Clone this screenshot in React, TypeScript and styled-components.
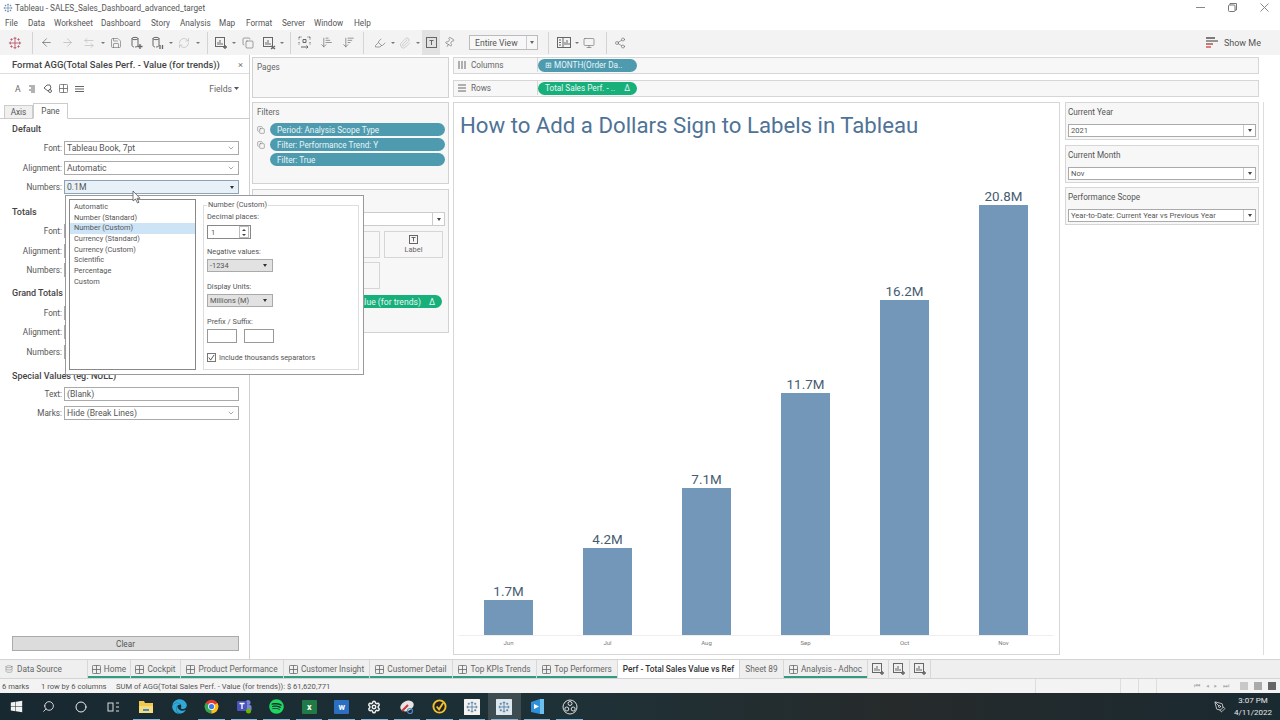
import React from 'react';
import styled, { createGlobalStyle } from 'styled-components';
import {
  ArrowLeft,
  ArrowRight,
  ArrowLeftRight,
  Save,
  Database,
  RefreshCw,
  Copy,
  ArrowDownNarrowWide,
  ArrowDownWideNarrow,
  Highlighter,
  Paperclip,
  Pin,
  Monitor,
  Share2,
  Search,
  Circle,
  Settings,
  PenTool,
  ChevronDown,
} from 'lucide-react';
import { FaWindows, FaSpotify, FaEdge } from 'react-icons/fa';

const GlobalStyle = createGlobalStyle`
  html, body { margin: 0; padding: 0; background: #fff; }
  body { font-family: Roboto, "Liberation Sans", sans-serif; color: #444; overflow: hidden; }
  * { box-sizing: border-box; }
`;

const Page = styled.div`
  width: 1280px;
  height: 720px;
  display: flex;
  flex-direction: column;
  position: relative;
  overflow: hidden;
`;

/* window chrome */
const TitleBar = styled.div`
  height: 15px;
  flex: none;
  display: flex;
  align-items: center;
  padding-left: 3px;
  gap: 2px;
  font-size: 8.2px;
  color: #555;
  background: #fff;
`;
const WindowButtons = styled.div`
  margin-left: auto;
  display: flex;
  color: #777;
`;
const WindowButton = styled.span`
  width: 32px;
  display: flex;
  justify-content: center;
  align-items: center;
  height: 15px;
`;
const MenuBar = styled.div`
  height: 15px;
  flex: none;
  display: flex;
  align-items: center;
  padding-left: 5px;
  font-size: 8.2px;
  color: #555;
`;
const MenuItem = styled.span<{ $w: number }>`
  width: ${(p) => p.$w}px;
`;
const Toolbar = styled.div`
  height: 25px;
  flex: none;
  display: flex;
  align-items: center;
  background: #f3f3f3;
  padding-left: 5px;
  color: #666;
`;
const Tool = styled.span<{ $w?: number; $active?: boolean; $dim?: boolean }>`
  width: ${(p) => p.$w ?? 21}px;
  height: 25px;
  flex: none;
  display: flex;
  align-items: center;
  justify-content: center;
  background: ${(p) => (p.$active ? '#e2e2e2' : 'transparent')};
  color: ${(p) => (p.$dim ? '#b5b5b5' : '#666')};
`;
const Caret = styled.span<{ $w?: number }>`
  width: ${(p) => p.$w ?? 7}px;
  flex: none;
  display: flex;
  justify-content: center;
  &::after {
    content: '';
    border-left: 2px solid transparent;
    border-right: 2px solid transparent;
    border-top: 2px solid #777;
  }
`;
const ToolSep = styled.span<{ $l: number; $r: number }>`
  width: 1px;
  height: 22px;
  flex: none;
  background: #d4d4d4;
  margin: 0 ${(p) => p.$r}px 0 ${(p) => p.$l}px;
`;
const FitBox = styled.div`
  width: 69px;
  height: 15px;
  flex: none;
  margin-left: 11px;
  display: flex;
  align-items: center;
  border: 1px solid #bbb;
  background: #f7f7f7;
  font-size: 8.6px;
  color: #555;
  padding-left: 5px;
  justify-content: space-between;
`;
const FitArrow = styled.span`
  width: 11px;
  height: 13px;
  border-left: 1px solid #ccc;
  display: flex;
  align-items: center;
  justify-content: center;
  &::after {
    content: '';
    border-left: 2.5px solid transparent;
    border-right: 2.5px solid transparent;
    border-top: 3px solid #666;
  }
`;
const ShowMe = styled.div`
  margin-left: auto;
  margin-right: 19px;
  display: flex;
  align-items: center;
  gap: 6px;
  font-size: 9px;
  color: #555;
`;

/* main area */
const Main = styled.div`
  flex: 1;
  min-height: 0;
  display: flex;
`;
const FormatPane = styled.aside`
  width: 250px;
  flex: none;
  display: flex;
  flex-direction: column;
  border-right: 1px solid #cfcfcf;
  background: #fff;
  padding-bottom: 8px;
`;
const FormatTitle = styled.div`
  height: 19px;
  flex: none;
  border-bottom: 1px solid #ddd;
  padding: 0 6px 0 12px;
  display: flex;
  align-items: center;
  justify-content: space-between;
  font-size: 9.4px;
  font-weight: 500;
  color: #444;
`;
const CloseMark = styled.span`
  color: #777;
  font-weight: 400;
`;
const FormatTools = styled.div`
  height: 29px;
  flex: none;
  display: flex;
  align-items: center;
  padding: 0 10px 0 15px;
  gap: 7px;
  color: #666;
  font-size: 8.6px;
`;
const FieldsMenu = styled.span`
  margin-left: auto;
  color: #666;
  display: flex;
  align-items: center;
  gap: 2px;
`;
const Tabs = styled.div`
  height: 16px;
  flex: none;
  display: flex;
  align-items: flex-end;
  padding-left: 4px;
  border-bottom: 1px solid #ccc;
  font-size: 8.2px;
  color: #555;
`;
const PaneTab = styled.span<{ $on?: boolean }>`
  width: ${(p) => (p.$on ? 35 : 29)}px;
  height: ${(p) => (p.$on ? 16 : 14)}px;
  display: flex;
  align-items: center;
  justify-content: center;
  background: ${(p) => (p.$on ? '#fff' : '#f0f0f0')};
  border: 1px solid #ccc;
  border-bottom: ${(p) => (p.$on ? '1px solid #fff' : '1px solid #ccc')};
  margin-bottom: -1px;
`;
const FormatBody = styled.div`
  flex: 1;
  padding: 3.5px 10px 0 12px;
  display: flex;
  flex-direction: column;
`;
const Heading = styled.div<{ $top?: number }>`
  font-size: 9px;
  font-weight: 500;
  color: #444;
  margin-top: ${(p) => p.$top ?? 0}px;
  height: 13px;
  line-height: 13px;
  white-space: nowrap;
`;
const FieldRow = styled.div<{ $top?: number }>`
  display: flex;
  align-items: center;
  gap: 2px;
  margin-top: ${(p) => p.$top ?? 5.5}px;
  height: 14px;
`;
const FieldLabel = styled.span`
  width: 50px;
  text-align: right;
  font-size: 8.2px;
  color: #555;
  white-space: nowrap;
  flex: none;
`;
const FieldSelect = styled.div<{ $focus?: boolean }>`
  flex: 1;
  height: 14px;
  border: 1px solid ${(p) => (p.$focus ? '#8ea3b8' : '#aaa')};
  background: ${(p) => (p.$focus ? '#e8f0f8' : '#fff')};
  font-size: 8.6px;
  color: #555;
  display: flex;
  align-items: center;
  justify-content: space-between;
  padding: 0 3px 0 2px;
`;
const Triangle = styled.span`
  border-left: 2.5px solid transparent;
  border-right: 2.5px solid transparent;
  border-top: 3px solid #333;
  margin-right: 1px;
`;
const ClearButton = styled.div`
  margin: auto 0 0;
  height: 15px;
  background: #dcdcdc;
  border: 1px solid #aaa;
  font-size: 8.2px;
  color: #555;
  display: flex;
  align-items: center;
  justify-content: center;
`;

const CardsColumn = styled.div`
  width: 197px;
  flex: none;
  margin-left: 2px;
  padding-top: 2px;
  display: flex;
  flex-direction: column;
  gap: 4px;
`;
const Card = styled.div<{ $h: number; $gap?: number }>`
  height: ${(p) => p.$h}px;
  flex: none;
  background: #f7f7f7;
  border: 1px solid #d2d2d2;
  padding: 4px 3px 0 4px;
  font-size: 8.2px;
  color: #666;
  margin-top: ${(p) => p.$gap ?? 0}px;
`;
const FilterList = styled.div`
  margin-top: 6px;
  display: flex;
  flex-direction: column;
  gap: 2px;
`;
const FilterRow = styled.div`
  display: flex;
  align-items: center;
  gap: 5px;
`;
const FilterIcon = styled.span`
  width: 8px;
  height: 8px;
  flex: none;
  display: flex;
`;
const Pill = styled.div<{ $c: string }>`
  flex: 1;
  height: 13px;
  border-radius: 7px;
  background: ${(p) => p.$c};
  color: #e8f4f6;
  font-size: 8.2px;
  padding: 0 7px;
  display: flex;
  align-items: center;
  justify-content: space-between;
  white-space: nowrap;
  overflow: hidden;
`;
const MarkSelect = styled.div`
  height: 14px;
  margin: 8px 0 0 1px;
  background: #fff;
  border: 1px solid #ccc;
  display: flex;
  justify-content: flex-end;
`;
const MarkGrid = styled.div`
  margin: 5px 0 0 1px;
  display: grid;
  grid-template-columns: repeat(3, 59px);
  grid-auto-rows: 27px;
  gap: 4px;
`;
const MarkCell = styled.div`
  border: 1px solid #d6d6d6;
  background: #f7f7f7;
  display: flex;
  flex-direction: column;
  align-items: center;
  justify-content: center;
  gap: 1px;
  font-size: 7.4px;
  color: #666;
`;
const MarkPill = styled(Pill)`
  margin: 6px 3px 0 3px;
  justify-content: flex-end;
  gap: 8px;
  font-size: 8.6px;
`;

const Workspace = styled.div`
  flex: 1;
  margin-left: 4px;
  padding-top: 2px;
  display: flex;
  flex-direction: column;
  min-width: 0;
`;
const Shelf = styled.div<{ $mb: number }>`
  width: 806px;
  height: 17px;
  flex: none;
  margin-bottom: ${(p) => p.$mb}px;
  padding-bottom: 1px;
  background: #f7f7f7;
  border: 1px solid #d6d6d6;
  display: flex;
  align-items: center;
`;
const ShelfLabel = styled.div`
  width: 84px;
  height: 100%;
  border-right: 1px solid #d6d6d6;
  display: flex;
  align-items: center;
  gap: 5px;
  padding-left: 4px;
  font-size: 8.2px;
  color: #666;
  flex: none;
`;
const ShelfPill = styled(Pill)`
  flex: none;
  width: 99px;
  margin-left: 0;
`;
const ViewRow = styled.div`
  flex: 1;
  min-height: 0;
  display: flex;
  margin-bottom: 4px;
`;
const ChartCard = styled.section`
  width: 607px;
  flex: none;
  background: #fff;
  border: 1px solid #d6d6d6;
  padding: 0 6px 0 5px;
  display: flex;
  flex-direction: column;
`;
const ChartTitle = styled.h1`
  margin: 0;
  padding-left: 1px;
  height: 44px;
  line-height: 44px;
  font-size: 22.2px;
  font-weight: 400;
  color: #4e7396;
  white-space: nowrap;
`;
const Plot = styled.div`
  flex: 1;
  display: flex;
  align-items: flex-end;
  border-bottom: 1px solid #eee;
  min-height: 0;
`;
const BarColumn = styled.div`
  width: 99px;
  flex: none;
  display: flex;
  flex-direction: column;
  align-items: center;
`;
const BarValue = styled.span`
  font-size: 13.4px;
  color: #465c72;
  line-height: 15px;
  margin-bottom: 1px;
`;
const Bar = styled.div`
  width: 49px;
  background: #7297b9;
`;
const AxisRow = styled.div`
  height: 18px;
  flex: none;
  display: flex;
`;
const AxisLabel = styled.span`
  width: 99px;
  text-align: center;
  font-size: 6px;
  color: #777;
  padding-top: 3px;
`;
const ParamsColumn = styled.div`
  width: 194px;
  flex: none;
  margin-left: 5px;
  display: flex;
  flex-direction: column;
  gap: 4.5px;
`;
const ParamCard = styled.div`
  height: 38px;
  flex: none;
  background: #f7f7f7;
  border: 1px solid #d6d6d6;
  padding: 4px 2px 0 2px;
  font-size: 8.2px;
  color: #555;
`;
const ParamSelect = styled.div`
  margin-top: 7px;
  height: 13px;
  background: #fff;
  border: 1px solid #aaa;
  display: flex;
  align-items: center;
  justify-content: space-between;
  font-size: 7.6px;
  padding-left: 2px;
  color: #555;
`;
const SmallArrow = styled.span`
  width: 12px;
  height: 100%;
  flex: none;
  border-left: 1px solid #ccc;
  display: flex;
  align-items: center;
  justify-content: center;
  &::after {
    content: '';
    border-left: 2.5px solid transparent;
    border-right: 2.5px solid transparent;
    border-top: 3px solid #444;
  }
`;
const RightEdge = styled.div`
  width: 17px;
  flex: none;
  margin-left: 4px;
  border-left: 1px solid #ddd;
`;

/* number format popup */
const Popup = styled.div`
  position: absolute;
  left: 65px;
  top: 195px;
  width: 299px;
  height: 180px;
  background: #fff;
  border: 1px solid #999;
  padding: 3px 4px 4px 3px;
  display: flex;
  gap: 7px;
  font-size: 7.4px;
  color: #555;
`;
const FormatList = styled.ul`
  list-style: none;
  margin: 0;
  padding: 2px 0 0;
  width: 127px;
  border: 1px solid #888;
  flex: none;
`;
const FormatItem = styled.li<{ $on?: boolean }>`
  height: 10.7px;
  line-height: 10.7px;
  padding-left: 4px;
  background: ${(p) => (p.$on ? '#cde4f7' : 'transparent')};
`;
const Group = styled.fieldset`
  flex: 1;
  margin: 2px 0 0;
  padding: 3px 0 0 3px;
  border: 1px solid #ddd;
  display: flex;
  flex-direction: column;
  min-width: 0;
`;
const GroupLegend = styled.legend`
  padding: 0 1px;
  margin-left: 0;
  line-height: 8px;
`;
const GroupLabel = styled.div<{ $top?: number }>`
  margin-top: ${(p) => p.$top ?? 0}px;
  height: 10px;
  line-height: 10px;
`;
const SpinBox = styled.div`
  margin-top: 3px;
  width: 44px;
  height: 14px;
  border: 1px solid #888;
  display: flex;
  align-items: center;
  justify-content: space-between;
  padding-left: 3px;
`;
const SpinButtons = styled.div`
  width: 10px;
  height: 12px;
  margin-right: 1px;
  border: 1px solid #bbb;
  color: #444;
  display: flex;
  flex-direction: column;
  align-items: center;
  justify-content: space-around;
  &::before {
    content: '';
    border-left: 2px solid transparent;
    border-right: 2px solid transparent;
    border-bottom: 2px solid #444;
  }
  &::after {
    content: '';
    border-left: 2px solid transparent;
    border-right: 2px solid transparent;
    border-top: 2px solid #444;
  }
`;
const ComboBox = styled.div`
  margin-top: 2px;
  width: 66px;
  height: 13px;
  background: #e2e2e2;
  border: 1px solid #aaa;
  display: flex;
  align-items: center;
  justify-content: space-between;
  padding: 0 5px 0 2px;
  &::after {
    content: '';
    border-left: 2.5px solid transparent;
    border-right: 2.5px solid transparent;
    border-top: 3px solid #333;
  }
`;
const AffixRow = styled.div`
  margin-top: 2px;
  display: flex;
  gap: 7px;
`;
const AffixBox = styled.div`
  width: 30px;
  height: 14px;
  border: 1px solid #999;
`;
const CheckRow = styled.div`
  margin-top: 10px;
  display: flex;
  align-items: center;
  gap: 3px;
  font-size: 7.3px;
`;
const CheckBox = styled.span`
  width: 9px;
  height: 9px;
  border: 1px solid #777;
  display: flex;
`;
const Cursor = styled.svg`
  position: absolute;
  left: 132px;
  top: 190px;
`;

/* sheet tabs and status */
const SheetBar = styled.div`
  height: 20px;
  flex: none;
  display: flex;
  background: #efefef;
  border-top: 1px solid #d4d4d4;
  border-bottom: 1px solid #d4d4d4;
  font-size: 8.3px;
  color: #666;
`;
const SheetTab = styled.div<{ $w: number; $line?: boolean; $on?: boolean }>`
  width: ${(p) => p.$w}px;
  flex: none;
  display: flex;
  align-items: center;
  justify-content: center;
  gap: 3px;
  white-space: nowrap;
  border-right: 1px solid #d8d8d8;
  background: ${(p) => (p.$on ? '#fff' : 'transparent')};
  color: ${(p) => (p.$on ? '#333' : '#666')};
  font-weight: ${(p) => (p.$on ? 500 : 400)};
  box-shadow: ${(p) => (p.$line ? 'inset 0 -2px 0 #2f9e80' : 'none')};
`;
const SourceTab = styled(SheetTab)`
  justify-content: flex-start;
  padding-left: 5px;
  gap: 4px;
`;
const StatusBar = styled.div`
  height: 14px;
  flex: none;
  display: flex;
  align-items: center;
  background: #f3f3f3;
  font-size: 7.6px;
  color: #555;
  padding-left: 2px;
`;
const StatusText = styled.span<{ $w: number }>`
  width: ${(p) => p.$w}px;
  flex: none;
  white-space: nowrap;
`;
const StatusCell = styled.span<{ $w: number }>`
  width: ${(p) => p.$w}px;
  height: 100%;
  flex: none;
  border-left: 1px solid #ddd;
`;
const PageNav = styled.div`
  flex: 1;
  height: 100%;
  border-left: 1px solid #ddd;
  display: flex;
  align-items: center;
  padding-left: 37px;
  color: #aaa;
  font-size: 7px;
  word-spacing: 4px;
`;
const ViewIcons = styled.div`
  display: flex;
  gap: 6px;
  margin-left: auto;
  margin-right: 4px;
`;
const ViewIcon = styled.span<{ $c: string }>`
  width: 8px;
  height: 8px;
  background: ${(p) => p.$c};
`;

/* taskbar */
const Taskbar = styled.div`
  height: 27px;
  flex: none;
  display: flex;
  align-items: center;
  background: linear-gradient(90deg, #182830 0%, #1e3137 45%, #262a2b 70%, #1a2a31 100%);
  color: #eee;
  padding-left: 0;
`;
const TaskIcon = styled.div<{ $open?: boolean; $active?: boolean }>`
  width: 32.55px;
  height: 27px;
  flex: none;
  display: flex;
  align-items: center;
  justify-content: center;
  position: relative;
  background: ${(p) => (p.$active ? '#3e4c51' : 'transparent')};
  &::after {
    content: '';
    display: ${(p) => (p.$open ? 'block' : 'none')};
    position: absolute;
    left: 3px;
    right: 3px;
    bottom: 0;
    height: 1px;
    background: #7fb6dc;
  }
`;
const Tray = styled.div`
  margin-left: auto;
  display: flex;
  align-items: center;
  gap: 8px;
  padding-right: 8px;
`;
const Clock = styled.div`
  font-size: 8px;
  text-align: center;
  line-height: 12px;
  color: #e6e6e6;
`;
const AppTile = styled.span<{ $c: string }>`
  width: 15px;
  height: 14px;
  background: ${(p) => p.$c};
  color: #fff;
  font-size: 9px;
  font-weight: 700;
  display: flex;
  align-items: center;
  justify-content: center;
  border-radius: 1px;
`;

const marks = 'M12 6.500v11M6.500 12h11M12 1.500v5M9.500 4h5M12 17.500v5M9.500 20h5M1.500 12h5M4 9.500v5M17.500 12h5M20 9.500v5M6 4v4M4 6h4M18 4v4M16 6h4M6 16v4M4 18h4M18 16v4M16 18h4';

const TableauMark = ({ size = 12, color = '#777' }: { size?: number; color?: string }) => (
  <svg width={size} height={size} viewBox="0 0 24 24" stroke={color} strokeWidth="1.5" fill="none">
    <path d={marks} />
  </svg>
);

const TableauTile = ({ bg }: { bg: string }) => (
  <svg width="16" height="16" viewBox="-3 -3 30 30">
    <rect x="-3" y="-3" width="30" height="30" rx="1" fill={bg} />
    <path d={marks} stroke="#3f6f96" strokeWidth="1.400" fill="none" />
  </svg>
);

const SheetGlyph = () => (
  <svg width="9" height="9" viewBox="0 0 10 10" fill="none" stroke="#666" strokeWidth="0.9">
    <rect x="0.5" y="0.5" width="9" height="9" rx="1" />
    <path d="M5 0.500v9M0.500 5h9" />
  </svg>
);

const ChartPlus = ({ kind }: { kind: 'plus' | 'x' }) => (
  <svg width="14" height="14" viewBox="0 0 14 14" fill="none" stroke="#666" strokeWidth="1">
    <rect x="1.500" y="1.500" width="9" height="9" />
    <path d="M4 9V6M6 9V4M8 9V7" />
    {kind === 'plus' ? <path d="M11 9v4M9 11h4" strokeWidth="1.400" /> : <path d="M9 10l4 3M13 10l-4 3" strokeWidth="1.400" />}
  </svg>
);

const DataSource = ({ kind }: { kind: 'plus' | 'pause' }) => (
  <svg width="14" height="14" viewBox="0 0 14 14" fill="none" stroke="#666" strokeWidth="1">
    <path d="M2 2.500C2 1 8 1 8 2.500V9.500C8 10.500 6 11 5 11M2 2.500V9.500C2 10.300 3 10.800 4 11M2 2.500C2 4 8 4 8 2.500" />
    {kind === 'plus' ? <path d="M10 8v5M7.500 10.500h5" strokeWidth="1.300" /> : <path d="M9 9v4M11.500 9v4" strokeWidth="1.300" />}
  </svg>
);

const SwapCard = () => (
  <svg width="13" height="13" viewBox="0 0 13 13" fill="none" stroke="#666" strokeWidth="1">
    <path d="M1 1h3M1 1v3M12 1H9M12 1v3M1 6v3M12 6v3" strokeDasharray="1.500 1" />
    <path d="M3 11h7M8.500 9.500L10 11l-1.500 1.500" />
    <path d="M5 3.500h3v3H5z" />
  </svg>
);

const ChromeIcon = () => (
  <svg width="15" height="15" viewBox="0 0 24 24">
    <circle cx="12" cy="12" r="11" fill="#e33b2e" />
    <path d="M12 12L2.500 6.500A11 11 0 0 0 12 23z" fill="#2da94f" />
    <path d="M12 12v11a11 11 0 0 0 9.500-16.500z" fill="#fbc116" />
    <circle cx="12" cy="12" r="5.500" fill="#fff" />
    <circle cx="12" cy="12" r="4.200" fill="#3f7ee8" />
  </svg>
);

const ExplorerIcon = () => (
  <svg width="16" height="14" viewBox="0 0 16 14">
    <path d="M1 1h5l1 2h8v10H1z" fill="#f2c94c" />
    <rect x="1" y="6" width="14" height="7" fill="#f7dc7c" />
    <rect x="5" y="9" width="6" height="2" fill="#3f8fc4" />
  </svg>
);

const TeamsIcon = () => (
  <svg width="16" height="15" viewBox="0 0 16 15">
    <circle cx="12" cy="3.500" r="2.500" fill="#7b83d6" />
    <rect x="9" y="6" width="6.500" height="6" rx="1.500" fill="#7b83d6" />
    <rect x="1" y="2" width="10" height="10" rx="1" fill="#4b53bc" />
    <path d="M3.500 4.500h5M6 4.500v5.500" stroke="#fff" strokeWidth="1.300" />
    <circle cx="12.500" cy="12" r="2.500" fill="#6bb700" />
  </svg>
);

const SnipIcon = () => (
  <svg width="16" height="16" viewBox="0 0 16 16">
    <ellipse cx="8" cy="7" rx="7" ry="5" fill="#e9e4e4" transform="rotate(-25 8 7)" />
    <path d="M3 12l6-6" stroke="#c33" strokeWidth="2" />
    <circle cx="11" cy="12" r="2.500" fill="none" stroke="#4b8fc9" strokeWidth="1.200" />
  </svg>
);

const NortonIcon = () => (
  <svg width="15" height="15" viewBox="0 0 16 16">
    <circle cx="8" cy="8" r="6.500" fill="#222" stroke="#f2c230" strokeWidth="2" />
    <path d="M5 8l2.500 3L12 4" fill="none" stroke="#f2c230" strokeWidth="2" />
  </svg>
);

const MovieIcon = () => (
  <svg width="15" height="17" viewBox="0 0 15 17">
    <path d="M1 4l9-3v15l-9-2z" fill="#2f8fd8" />
    <path d="M10 1h4v15h-4z" fill="#6cc0ef" />
    <path d="M4 6l5 2.500L4 11z" fill="#fff" />
  </svg>
);

const ObsIcon = () => (
  <svg width="16" height="16" viewBox="0 0 16 16" fill="none" stroke="#ddd" strokeWidth="1">
    <circle cx="8" cy="8" r="7" />
    <circle cx="8" cy="4.500" r="2" />
    <circle cx="4.800" cy="10" r="2" />
    <circle cx="11.200" cy="10" r="2" />
  </svg>
);

const menus: [string, number][] = [
  ['File', 23],
  ['Data', 26],
  ['Worksheet', 47],
  ['Dashboard', 50],
  ['Story', 29],
  ['Analysis', 39],
  ['Map', 27],
  ['Format', 36],
  ['Server', 32],
  ['Window', 40],
  ['Help', 30],
];

const numberFormats = [
  'Automatic',
  'Number (Standard)',
  'Number (Custom)',
  'Currency (Standard)',
  'Currency (Custom)',
  'Scientific',
  'Percentage',
  'Custom',
];

const bars = [
  { month: 'Jun', label: '1.7M', height: 35 },
  { month: 'Jul', label: '4.2M', height: 87 },
  { month: 'Aug', label: '7.1M', height: 147 },
  { month: 'Sep', label: '11.7M', height: 242 },
  { month: 'Oct', label: '16.2M', height: 335 },
  { month: 'Nov', label: '20.8M', height: 430 },
];

const sheets: { name: string; w: number; glyph?: boolean; line?: boolean; on?: boolean }[] = [
  { name: 'Home', w: 43, glyph: true, line: true },
  { name: 'Cockpit', w: 50, glyph: true, line: true },
  { name: 'Product Performance', w: 103, glyph: true, line: true },
  { name: 'Customer Insight', w: 86, glyph: true, line: true },
  { name: 'Customer Detail', w: 83, glyph: true, line: true },
  { name: 'Top KPIs Trends', w: 84, glyph: true, line: true },
  { name: 'Top Performers', w: 81, glyph: true, line: true },
  { name: 'Perf - Total Sales Value vs Ref', w: 122, on: true },
  { name: 'Sheet 89', w: 44 },
  { name: 'Analysis - Adhoc', w: 84, glyph: true, line: true },
];

const formatGroups: { title: string; top: number; rows: [string, string, boolean?][] }[] = [
  {
    title: 'Default',
    top: 0,
    rows: [
      ['Font:', 'Tableau Book, 7pt'],
      ['Alignment:', 'Automatic'],
      ['Numbers:', '0.1M', true],
    ],
  },
  {
    title: 'Totals',
    top: 11.5,
    rows: [
      ['Font:', ''],
      ['Alignment:', ''],
      ['Numbers:', ''],
    ],
  },
  {
    title: 'Grand Totals',
    top: 10,
    rows: [
      ['Font:', ''],
      ['Alignment:', ''],
      ['Numbers:', ''],
    ],
  },
];

const params = [
  { title: 'Current Year', value: '2021' },
  { title: 'Current Month', value: 'Nov' },
  { title: 'Performance Scope', value: 'Year-to-Date: Current Year vs Previous Year' },
];

export default function App() {
  return (
    <Page>
      <GlobalStyle />
      <TitleBar>
        <TableauMark size={10} color="#5b7fa6" />
        Tableau - SALES_Sales_Dashboard_advanced_target
        <WindowButtons>
          <WindowButton>
            <svg width="9" height="9" viewBox="0 0 9 9" stroke="#888"><path d="M0 4.500h9" /></svg>
          </WindowButton>
          <WindowButton>
            <svg width="9" height="9" viewBox="0 0 9 9" fill="none" stroke="#777"><rect x="0.500" y="2" width="6.500" height="6.500" rx="1" /><path d="M2 2V.500h6.500V7H7" /></svg>
          </WindowButton>
          <WindowButton>
            <svg width="9" height="9" viewBox="0 0 9 9" stroke="#888"><path d="M.500.500l8 8M8.500.500l-8 8" /></svg>
          </WindowButton>
        </WindowButtons>
      </TitleBar>
      <MenuBar>
        {menus.map(([name, w]) => (
          <MenuItem key={name} $w={w}>{name}</MenuItem>
        ))}
      </MenuBar>
      <Toolbar>
        <Tool $w={20}><TableauMark size={14} color="#b9566a" /></Tool>
        <ToolSep $l={7} $r={3} />
        <Tool><ArrowLeft size={13} strokeWidth={1.3} /></Tool>
        <Tool $dim><ArrowRight size={13} strokeWidth={1.3} /></Tool>
        <Tool $dim><ArrowLeftRight size={12} strokeWidth={1.2} /></Tool>
        <Caret />
        <Tool $w={20}><Save size={12} strokeWidth={1.2} /></Tool>
        <Tool><DataSource kind="plus" /></Tool>
        <Tool><DataSource kind="pause" /></Tool>
        <Caret $w={6} />
        <Tool $w={20} $dim><RefreshCw size={12} strokeWidth={1.2} /></Tool>
        <Caret $w={7} />
        <ToolSep $l={6} $r={2} />
        <Tool $w={21}><ChartPlus kind="plus" /></Tool>
        <Caret $w={6} />
        <Tool $w={22}><Copy size={12} strokeWidth={1.2} /></Tool>
        <Tool $w={20}><ChartPlus kind="x" /></Tool>
        <Caret $w={6} />
        <ToolSep $l={5} $r={3} />
        <Tool $w={21}><SwapCard /></Tool>
        <Tool $w={22}><ArrowDownNarrowWide size={13} strokeWidth={1.2} /></Tool>
        <Tool $w={22}><ArrowDownWideNarrow size={13} strokeWidth={1.2} /></Tool>
        <ToolSep $l={4} $r={6} />
        <Tool $w={20}><Highlighter size={12} strokeWidth={1.2} /></Tool>
        <Caret $w={6} />
        <Tool $w={18} $dim><Paperclip size={12} strokeWidth={1.2} /></Tool>
        <Caret $w={8} />
        <Tool $w={18} $active>
          <svg width="11" height="11" viewBox="0 0 11 11" fill="none" stroke="#666"><rect x=".5" y=".5" width="10" height="10" /><path d="M3.500 3.500h4M5.500 3.500v4.500" /></svg>
        </Tool>
        <Tool $w={18}><Pin size={11} strokeWidth={1.2} style={{ transform: 'rotate(30deg)' }} /></Tool>
        <FitBox>Entire View<FitArrow /></FitBox>
        <ToolSep $l={10} $r={5} />
        <Tool $w={20}>
          <svg width="14" height="11" viewBox="0 0 14 11" fill="none" stroke="#666"><rect x=".5" y=".5" width="13" height="10" /><path d="M6 .5v10M2 3h2M2 5.500h2M2 8h2M8 8V5M10 8V3M12 8V6" /></svg>
        </Tool>
        <Caret $w={6} />
        <Tool $w={18}><Monitor size={12} strokeWidth={1.2} /></Tool>
        <ToolSep $l={8} $r={4} />
        <Tool $w={18}><Share2 size={12} strokeWidth={1.2} /></Tool>
        <ShowMe>
          <svg width="12" height="11" viewBox="0 0 12 11"><path d="M0 1h9" stroke="#555" strokeWidth="1.500" /><path d="M0 4h12" stroke="#777" strokeWidth="1.500" /><path d="M0 7h7" stroke="#a55" strokeWidth="1.500" /><path d="M0 10h5" stroke="#d55" strokeWidth="1.500" /></svg>
          Show Me
        </ShowMe>
      </Toolbar>

      <Main>
        <FormatPane>
          <FormatTitle>
            Format AGG(Total Sales Perf. -  Value (for trends))
            <CloseMark>×</CloseMark>
          </FormatTitle>
          <FormatTools>
            A
            <svg width="8" height="8" viewBox="0 0 8 8" stroke="#666"><path d="M1 1h6M3 3h4M1 5h6M3 7h4" /></svg>
            <svg width="9" height="9" viewBox="0 0 9 9" fill="none" stroke="#666"><path d="M1 4l3-3h3l1 3-3 3z" /><circle cx="7" cy="7" r="1.500" /></svg>
            <SheetGlyph />
            <svg width="9" height="8" viewBox="0 0 9 8" stroke="#666"><path d="M0 1.500h9M0 4h9M0 6.500h9" /></svg>
            <FieldsMenu>
              Fields
              <svg width="5" height="3" viewBox="0 0 5 3" fill="#555"><path d="M0 0h5L2.500 3z" /></svg>
            </FieldsMenu>
          </FormatTools>
          <Tabs>
            <PaneTab>Axis</PaneTab>
            <PaneTab $on>Pane</PaneTab>
          </Tabs>
          <FormatBody>
            {formatGroups.map((group) => (
              <React.Fragment key={group.title}>
                <Heading $top={group.top}>{group.title}</Heading>
                {group.rows.map(([label, value, focus]) => (
                  <FieldRow key={label}>
                    <FieldLabel>{label}</FieldLabel>
                    <FieldSelect $focus={focus}>
                      {value}
                      {focus ? <Triangle /> : <ChevronDown size={8} strokeWidth={1.5} />}
                    </FieldSelect>
                  </FieldRow>
                ))}
              </React.Fragment>
            ))}
            <Heading $top={11}>Special Values (eg. NULL)</Heading>
            <FieldRow $top={4}>
              <FieldLabel>Text:</FieldLabel>
              <FieldSelect>(Blank)</FieldSelect>
            </FieldRow>
            <FieldRow>
              <FieldLabel>Marks:</FieldLabel>
              <FieldSelect>
                Hide (Break Lines)
                <ChevronDown size={8} strokeWidth={1.5} />
              </FieldSelect>
            </FieldRow>
            <ClearButton>Clear</ClearButton>
          </FormatBody>
        </FormatPane>

        <CardsColumn>
          <Card $h={41}>Pages</Card>
          <Card $h={82}>
            Filters
            <FilterList>
              <FilterRow>
                <FilterIcon><Copy size={8} strokeWidth={1.5} /></FilterIcon>
                <Pill $c="#4e9bb0">Period: Analysis Scope Type</Pill>
              </FilterRow>
              <FilterRow>
                <FilterIcon><Copy size={8} strokeWidth={1.5} /></FilterIcon>
                <Pill $c="#4e9bb0">Filter: Performance Trend: Y</Pill>
              </FilterRow>
              <FilterRow>
                <FilterIcon />
                <Pill $c="#4e9bb0">Filter: True</Pill>
              </FilterRow>
            </FilterList>
          </Card>
          <Card $h={144} $gap={1}>
            Marks
            <MarkSelect><SmallArrow /></MarkSelect>
            <MarkGrid>
              <MarkCell>Color</MarkCell>
              <MarkCell>Size</MarkCell>
              <MarkCell>
                <svg width="9" height="9" viewBox="0 0 9 9" fill="none" stroke="#666"><rect x=".5" y=".5" width="8" height="8" /><path d="M2.500 2.500h4M4.500 2.500v4" /></svg>
                Label
              </MarkCell>
              <MarkCell>Detail</MarkCell>
              <MarkCell>Tooltip</MarkCell>
            </MarkGrid>
            <MarkPill $c="#17b07a">
              Total Sales Perf. - Value (for trends)
              <span>Δ</span>
            </MarkPill>
          </Card>
        </CardsColumn>

        <Workspace>
          <Shelf $mb={6}>
            <ShelfLabel>
              <svg width="8" height="8" viewBox="0 0 8 8" stroke="#666"><path d="M1 0v8M4 0v8M7 0v8" /></svg>
              Columns
            </ShelfLabel>
            <ShelfPill $c="#4e9bb0">⊞ MONTH(Order Da..</ShelfPill>
          </Shelf>
          <Shelf $mb={5}>
            <ShelfLabel>
              <svg width="8" height="8" viewBox="0 0 8 8" stroke="#666"><path d="M0 1h8M0 4h8M0 7h8" /></svg>
              Rows
            </ShelfLabel>
            <ShelfPill $c="#17b07a">
              Total Sales Perf. - ..
              <span>Δ</span>
            </ShelfPill>
          </Shelf>
          <ViewRow>
            <ChartCard>
              <ChartTitle>How to Add a Dollars Sign to Labels in Tableau</ChartTitle>
              <Plot>
                {bars.map((bar) => (
                  <BarColumn key={bar.month}>
                    <BarValue>{bar.label}</BarValue>
                    <Bar style={{ height: bar.height }} />
                  </BarColumn>
                ))}
              </Plot>
              <AxisRow>
                {bars.map((bar) => (
                  <AxisLabel key={bar.month}>{bar.month}</AxisLabel>
                ))}
              </AxisRow>
            </ChartCard>
            <ParamsColumn>
              {params.map((param) => (
                <ParamCard key={param.title}>
                  {param.title}
                  <ParamSelect>
                    {param.value}
                    <SmallArrow />
                  </ParamSelect>
                </ParamCard>
              ))}
            </ParamsColumn>
            <RightEdge />
          </ViewRow>
        </Workspace>
      </Main>

      <SheetBar>
        <SourceTab $w={88}>
          <Database size={8} strokeWidth={1.3} />
          Data Source
        </SourceTab>
        {sheets.map((sheet) => (
          <SheetTab key={sheet.name} $w={sheet.w} $line={sheet.line} $on={sheet.on}>
            {sheet.glyph && <SheetGlyph />}
            {sheet.name}
          </SheetTab>
        ))}
        <SheetTab $w={21}><ChartPlus kind="plus" /></SheetTab>
        <SheetTab $w={21}><ChartPlus kind="plus" /></SheetTab>
        <SheetTab $w={21}><ChartPlus kind="plus" /></SheetTab>
      </SheetBar>
      <StatusBar>
        <StatusText $w={39}>6 marks</StatusText>
        <StatusText $w={75}>1 row by 6 columns</StatusText>
        <StatusText $w={919}>SUM of AGG(Total Sales Perf. -  Value (for trends)): $ 61,620,771</StatusText>
        <StatusCell $w={85} />
        <StatusCell $w={18} />
        <StatusCell $w={18} />
        <PageNav>
          ⏮ ◂ ▸ ⏭
          <ViewIcons>
            <ViewIcon $c="#c8c8c8" />
            <ViewIcon $c="#aaa" />
            <ViewIcon $c="#666" />
          </ViewIcons>
        </PageNav>
      </StatusBar>

      <Taskbar>
        <TaskIcon><FaWindows size={13} color="#f2f2f2" /></TaskIcon>
        <TaskIcon><Search size={13} strokeWidth={1.6} color="#eee" style={{ transform: 'scaleX(-1)' }} /></TaskIcon>
        <TaskIcon><Circle size={12} strokeWidth={2} color="#eee" /></TaskIcon>
        <TaskIcon>
          <svg width="13" height="12" viewBox="0 0 13 12" fill="none" stroke="#ddd"><rect x="1" y="2" width="5" height="8" /><path d="M9 2h3M9 6h3M9 10h3" /></svg>
        </TaskIcon>
        <TaskIcon $open><ExplorerIcon /></TaskIcon>
        <TaskIcon><FaEdge size={15} color="#2fa8d8" /></TaskIcon>
        <TaskIcon $open><ChromeIcon /></TaskIcon>
        <TaskIcon $open><TeamsIcon /></TaskIcon>
        <TaskIcon $open><FaSpotify size={15} color="#1ed760" /></TaskIcon>
        <TaskIcon $open><AppTile $c="#1f7a45">x</AppTile></TaskIcon>
        <TaskIcon $open><AppTile $c="#2b6fc2">w</AppTile></TaskIcon>
        <TaskIcon $open><Settings size={14} strokeWidth={2.500} color="#f0f0f0" /></TaskIcon>
        <TaskIcon $open><SnipIcon /></TaskIcon>
        <TaskIcon $open><NortonIcon /></TaskIcon>
        <TaskIcon $open><TableauTile bg="#f2f2f2" /></TaskIcon>
        <TaskIcon $open $active><TableauTile bg="#dfe7ee" /></TaskIcon>
        <TaskIcon $open><MovieIcon /></TaskIcon>
        <TaskIcon $open><ObsIcon /></TaskIcon>
        <Tray>
          <PenTool size={12} strokeWidth={1.5} color="#e8e8e8" />
          <Clock>
            3:07 PM
            <br />
            4/11/2022
          </Clock>
        </Tray>
      </Taskbar>

      <Popup>
        <FormatList>
          {numberFormats.map((name) => (
            <FormatItem key={name} $on={name === 'Number (Custom)'}>{name}</FormatItem>
          ))}
        </FormatList>
        <Group>
          <GroupLegend>Number (Custom)</GroupLegend>
          <GroupLabel>Decimal places:</GroupLabel>
          <SpinBox>1<SpinButtons /></SpinBox>
          <GroupLabel $top={8}>Negative values:</GroupLabel>
          <ComboBox>-1234</ComboBox>
          <GroupLabel $top={10}>Display Units:</GroupLabel>
          <ComboBox>Millions (M)</ComboBox>
          <GroupLabel $top={10}>Prefix / Suffix:</GroupLabel>
          <AffixRow><AffixBox /><AffixBox /></AffixRow>
          <CheckRow>
            <CheckBox>
              <svg width="7" height="7" viewBox="0 0 8 8" fill="none" stroke="#444"><path d="M1 4l2 3 4-6" /></svg>
            </CheckBox>
            Include thousands separators
          </CheckRow>
        </Group>
      </Popup>
      <Cursor width="10" height="14" viewBox="0 0 10 14">
        <path d="M1 1v10l2.500-2 2 4 1.500-.7-2-4H8z" fill="#fff" stroke="#555" strokeWidth=".8" />
      </Cursor>
    </Page>
  );
}
